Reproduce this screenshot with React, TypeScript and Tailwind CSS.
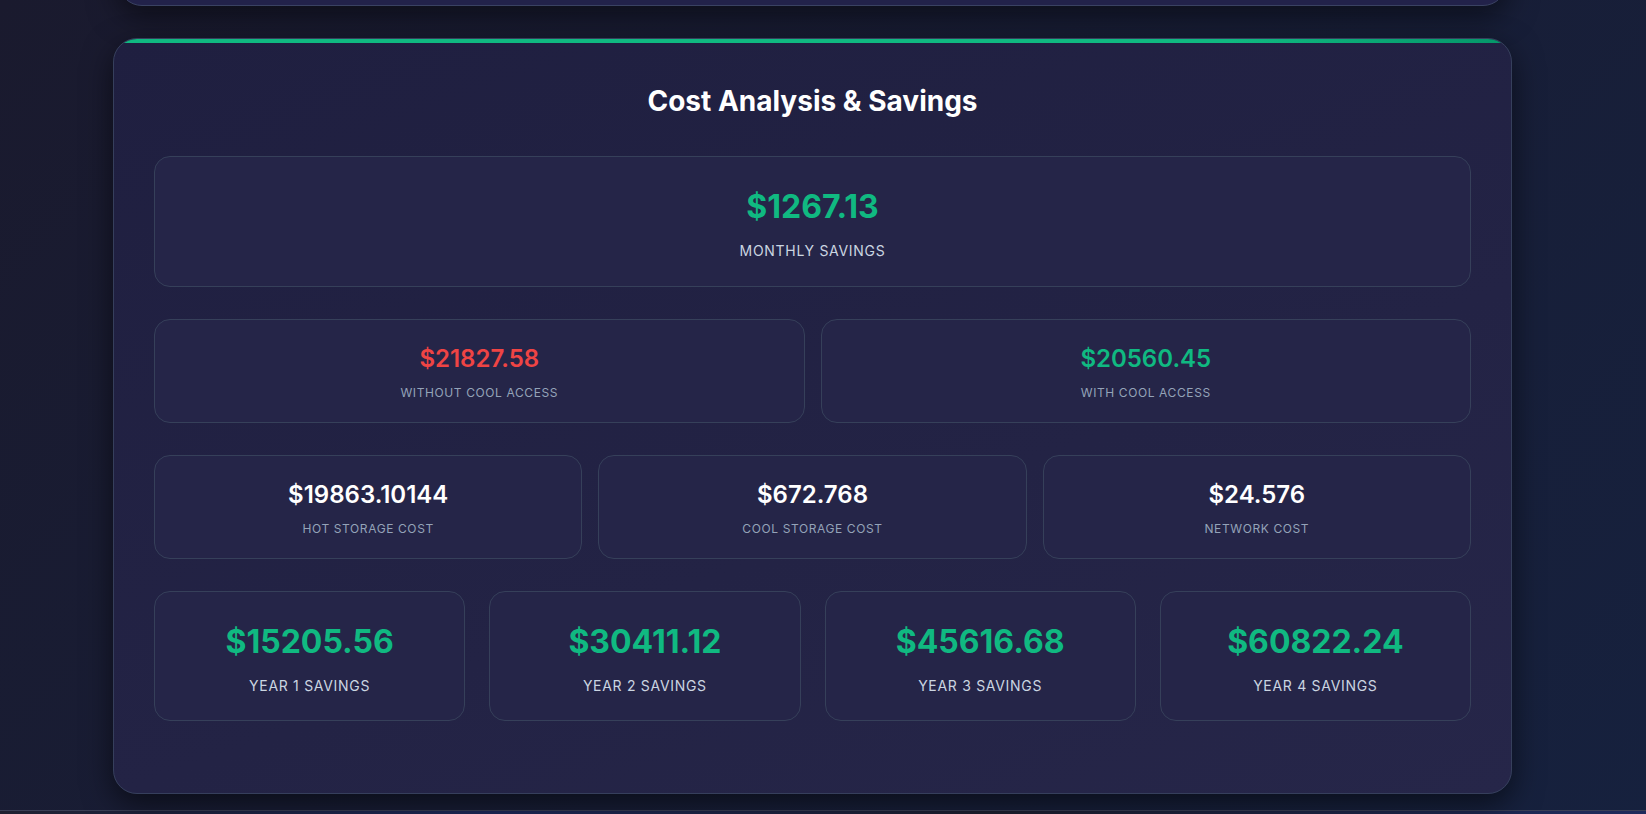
import React from "react";

type Item = { value: string; label: string };

const mid: Item[] = [
  { value: "$19863.10144", label: "Hot Storage Cost" },
  { value: "$672.768", label: "Cool Storage Cost" },
  { value: "$24.576", label: "Network Cost" },
];

const years: Item[] = [
  { value: "$15205.56", label: "Year 1 Savings" },
  { value: "$30411.12", label: "Year 2 Savings" },
  { value: "$45616.68", label: "Year 3 Savings" },
  { value: "$60822.24", label: "Year 4 Savings" },
];

function BigCard({ value, label }: Item) {
  return (
    <div className="rounded-2xl border border-[#36405a] bg-[#252548] p-6 text-center">
      <div className="mb-[7px] text-[32px] font-bold leading-[52px] text-[#10b981]">{value}</div>
      <div className="text-[14px] leading-[21px] uppercase tracking-[0.7px] text-[#cbd5e1]">{label}</div>
    </div>
  );
}

function SmallCard({ value, label, color }: Item & { color: string }) {
  return (
    <div className="rounded-2xl border border-[#36405a] bg-[#252548] p-5 text-center">
      <div className={`mb-[6px] text-[24px] font-semibold leading-[38px] ${color}`}>{value}</div>
      <div className="text-[12px] leading-[18px] uppercase tracking-[0.6px] text-[#94a3b8]">{label}</div>
    </div>
  );
}

export default function App() {
  return (
    <div
      className="min-h-screen overflow-hidden bg-[linear-gradient(135deg,#1a1a2e_0%,#16213e_100%)] text-white"
      style={{ fontFamily: "Inter, 'Noto Sans', sans-serif" }}
    >
      <div className="ml-[113px] w-[1399px]">
        {/* previous section, scrolled mostly out of view */}
        <div className="mx-[5px] -mt-[194px] h-[200px] rounded-3xl border border-[#3a4262] bg-[#22224a] shadow-[0_10px_30px_rgba(0,0,0,0.5)]" />

        <div className="relative mt-8 overflow-hidden rounded-3xl border border-[#363f5c] bg-[linear-gradient(160deg,#1f1f40_0%,#232345_60%,#262649_100%)] p-10 shadow-[0_10px_30px_rgba(0,0,0,0.55)]">
          <div className="absolute left-0 right-0 top-0 h-1 bg-[linear-gradient(90deg,#10b981,#10b981_80%,#059669)]" />
          <h2 className="mb-[33px] text-center text-[28px] font-bold leading-[44px] text-white">
            Cost Analysis &amp; Savings
          </h2>

          <div className="mb-8">
            <div className="rounded-2xl border border-[#36405a] bg-[#252548] px-6 pt-6 pb-[25px] text-center">
              <div className="mb-[7px] text-[32px] font-bold leading-[52px] text-[#10b981]">$1267.13</div>
              <div className="text-[14px] leading-[21px] uppercase tracking-[0.7px] text-[#cbd5e1]">Monthly Savings</div>
            </div>
          </div>

          <div className="mb-8 grid grid-cols-2 gap-4">
            <SmallCard value="$21827.58" label="Without Cool Access" color="text-[#ef4444]" />
            <SmallCard value="$20560.45" label="With Cool Access" color="text-[#10b981]" />
          </div>

          <div className="mb-8 grid grid-cols-3 gap-4">
            {mid.map((m) => (
              <SmallCard key={m.label} value={m.value} label={m.label} color="text-white" />
            ))}
          </div>

          <div className="mb-8 grid grid-cols-4 gap-6">
            {years.map((y) => (
              <BigCard key={y.label} value={y.value} label={y.label} />
            ))}
          </div>
        </div>
      </div>

      <div className="mt-4 h-[40px] border-t border-[#3a3f55] bg-[linear-gradient(90deg,#1e2030_0%,#1e2a5c_30%,#1e2030_60%,#1e2a5c_100%)]" />
    </div>
  );
}
